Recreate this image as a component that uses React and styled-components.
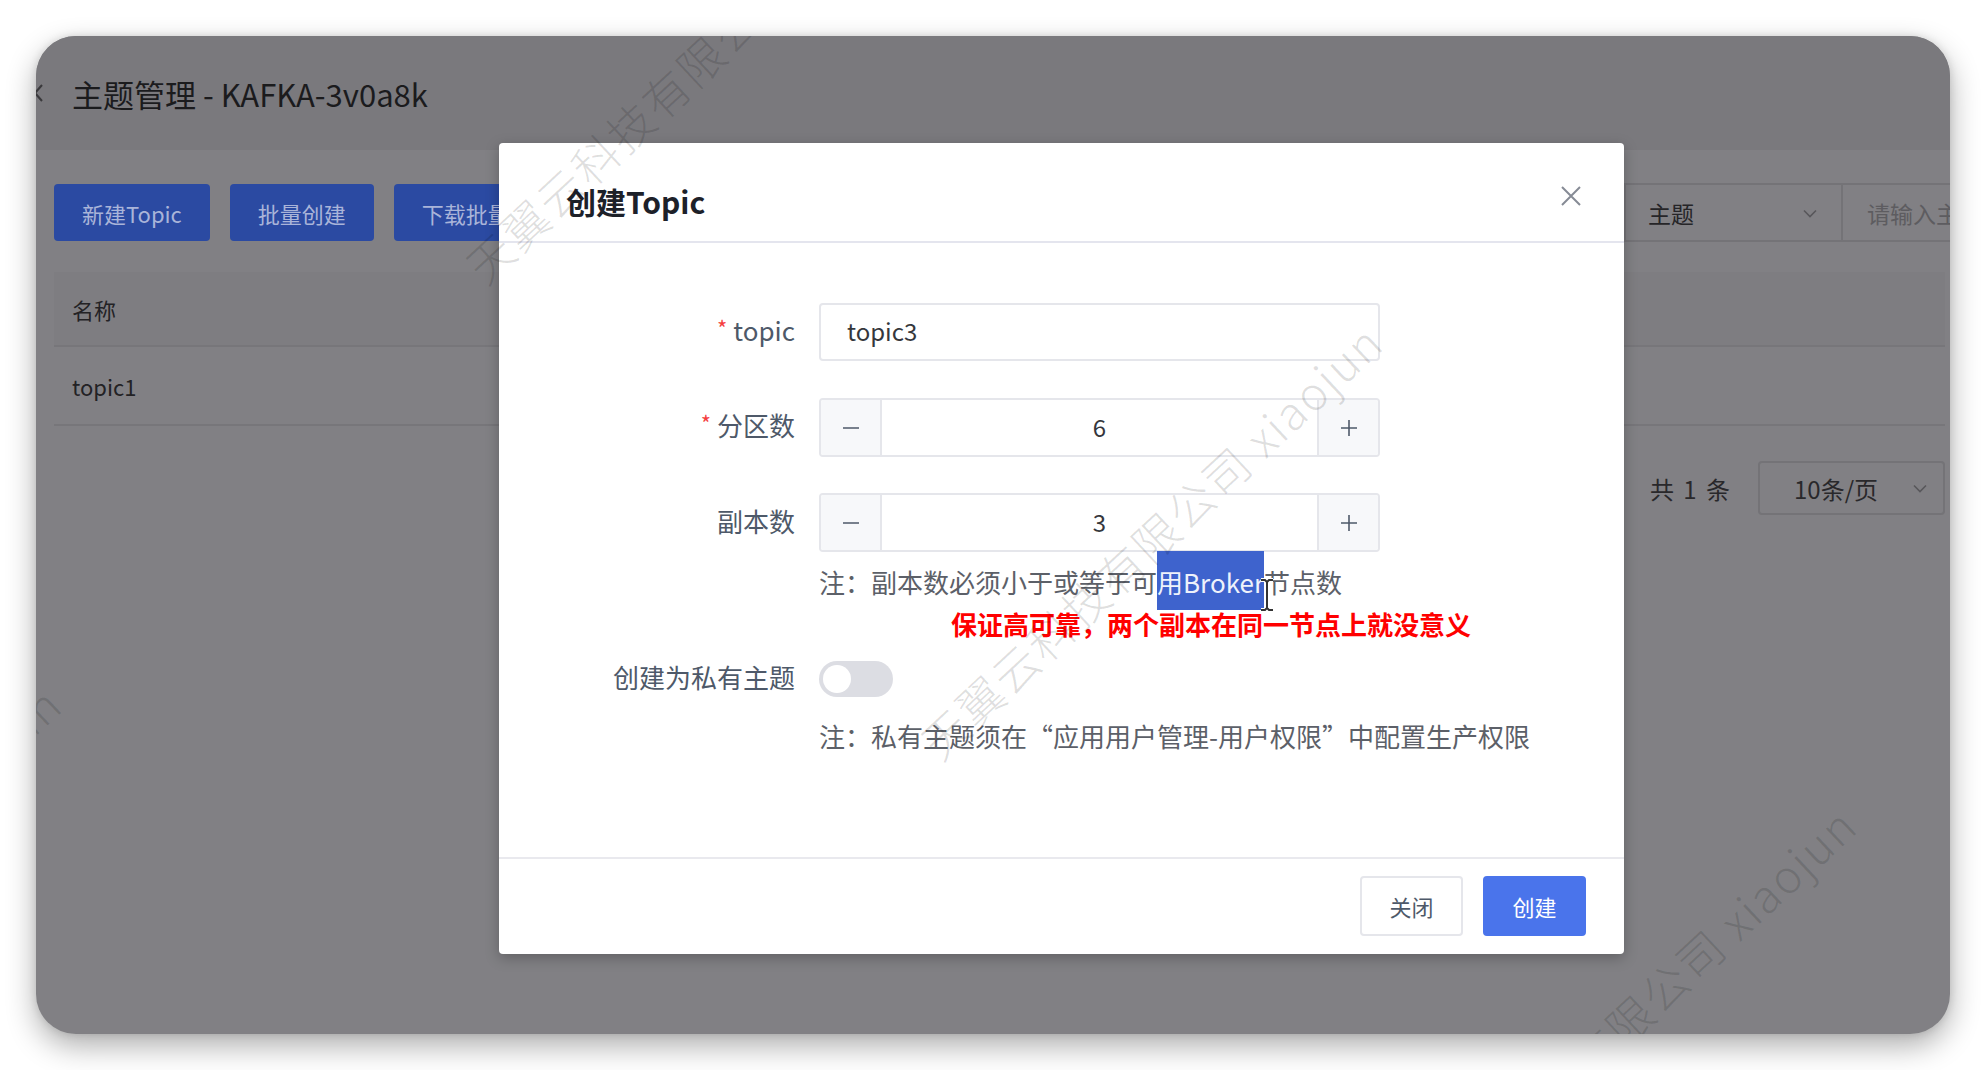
import styled, { createGlobalStyle } from "styled-components";

const GlobalStyle = createGlobalStyle`
  html, body {
    margin: 0;
    padding: 0;
    background: #ffffff;
  }
  body {
    font-family: "Noto Sans CJK SC", "Noto Sans", sans-serif;
  }
  * {
    box-sizing: border-box;
  }
`;

const Stage = styled.div`
  width: 1986px;
  height: 1070px;
  padding: 36px;
  background: #ffffff;
`;

const Window = styled.div`
  position: relative;
  width: 100%;
  height: 100%;
  border-radius: 40px;
  overflow: hidden;
  background: #818084;
  box-shadow: 0 12px 30px rgba(0, 0, 0, 0.32), 0 0 8px rgba(0, 0, 0, 0.12);
`;

/* ---------- dimmed page behind the dialog ---------- */

const Page = styled.div`
  display: flex;
  flex-direction: column;
  height: 100%;
`;

const PageHeader = styled.header`
  height: 114px;
  flex-shrink: 0;
  display: flex;
  align-items: center;
  gap: 28px;
  background: #7a797d;
  color: #1b1b1d;
  font-size: 31px;
`;

const Back = styled.svg`
  margin-left: -4px;
  flex-shrink: 0;
`;

const Content = styled.div`
  flex: 1;
  padding: 33px 5px 0 18px;
`;

const Toolbar = styled.div`
  display: flex;
  align-items: center;
`;

const ButtonGroup = styled.div`
  flex: 1;
  display: flex;
  gap: 20px;
`;

const DimButton = styled.div`
  height: 57px;
  padding: 0 28px;
  display: flex;
  align-items: center;
  border-radius: 4px;
  background: #2b4aa2;
  color: #a9b4d9;
  font-size: 22px;
`;

const FieldSelect = styled.div`
  width: 218px;
  height: 59px;
  display: flex;
  align-items: center;
  justify-content: space-between;
  padding: 0 22px 0 22px;
  border: 2px solid #747377;
  border-right-width: 1px;
  color: #262528;
  font-size: 23px;
`;

const SearchBox = styled.div`
  width: 200px;
  height: 59px;
  margin-right: -97px;
  display: flex;
  align-items: center;
  padding-left: 24px;
  border: 2px solid #747377;
  border-left-width: 1px;
  color: #5d5c60;
  font-size: 23px;
  white-space: nowrap;
  overflow: hidden;
`;

const Table = styled.div`
  margin-top: 30px;
`;

const TableRow = styled.div`
  display: flex;
  align-items: center;
  height: ${(p) => p.$h}px;
  padding-left: 18px;
  background: ${(p) => (p.$head ? "#7e7d81" : "transparent")};
  border-bottom: 2px solid #77767a;
  color: #232225;
  font-size: 22px;
`;

const Pagination = styled.div`
  margin-top: 35px;
  display: flex;
  justify-content: flex-end;
  align-items: center;
  gap: 28px;
  color: #29282b;
  font-size: 24px;
`;

const Total = styled.span`
  word-spacing: 4px;
`;

const PageSize = styled.div`
  width: 187px;
  height: 54px;
  display: flex;
  align-items: center;
  justify-content: space-between;
  padding: 0 14px 0 34px;
  border: 2px solid #747377;
  border-radius: 4px;
`;

/* ---------- mask + dialog ---------- */

const Mask = styled.div`
  position: absolute;
  inset: 0;
  display: flex;
  align-items: flex-start;
  padding: 107px 0 0 463px;
`;

const Modal = styled.div`
  width: 1125px;
  height: 811px;
  display: flex;
  flex-direction: column;
  background: #ffffff;
  border-radius: 4px;
  box-shadow: 0 4px 14px rgba(0, 0, 0, 0.25);
`;

const ModalHeader = styled.div`
  height: 100px;
  flex-shrink: 0;
  display: flex;
  align-items: center;
  justify-content: space-between;
  padding: 8px 42px 0 67px;
  border-bottom: 2px solid #e4e5ee;
`;

const ModalTitle = styled.div`
  font-size: 30px;
  font-weight: 600;
  color: #1d2129;
  margin-top: 10px;
`;

const ModalBody = styled.div`
  flex: 1;
  padding-top: 60px;
`;

const FormRow = styled.div`
  display: grid;
  grid-template-columns: 296px 561px;
  column-gap: 24px;
  align-items: center;
  margin-top: ${(p) => p.$mt || 0}px;
`;

const Label = styled.div`
  text-align: right;
  font-size: 26px;
  line-height: 32px;
  color: #4e5969;
  margin-top: -4px;
`;

const Star = styled.span`
  color: #f53f3f;
  font-size: 22px;
  margin-right: 6px;
  position: relative;
  top: -4px;
`;

const TextInput = styled.div`
  height: 58px;
  display: flex;
  align-items: center;
  padding: 0 26px 3px;
  border: 2px solid #e5e6eb;
  border-radius: 4px;
  font-size: 24px;
  color: #35373c;
`;

const NumberInput = styled.div`
  height: 59px;
  display: grid;
  grid-template-columns: 61px 1fr 61px;
  border: 2px solid #e5e6eb;
  border-radius: 4px;
  overflow: hidden;
`;

const Step = styled.div`
  display: flex;
  align-items: center;
  justify-content: center;
  background: #f7f8fa;
  border-left: ${(p) => (p.$side === "right" ? "2px solid #e5e6eb" : "none")};
  border-right: ${(p) => (p.$side === "left" ? "2px solid #e5e6eb" : "none")};
`;

const NumberValue = styled.div`
  display: flex;
  align-items: center;
  justify-content: center;
  padding-bottom: 2px;
  font-size: 24px;
  color: #35373c;
`;

const Hint = styled.div`
  position: relative;
  margin: ${(p) => p.$mt}px 0 0 320px;
  line-height: 36px;
  font-size: 26px;
  color: #5c6068;
  white-space: nowrap;
`;

const Selected = styled.span`
  background: #3e63cd;
  color: #eef2fb;
  padding: 12px 0 10px;
`;

const Cursor = styled.svg`
  position: absolute;
  left: 440px;
  top: 14px;
`;

const Annotation = styled.div`
  margin: 6px 0 0 452px;
  line-height: 36px;
  font-size: 26px;
  font-weight: 700;
  color: #ff0000;
  white-space: nowrap;
`;

const Toggle = styled.div`
  width: 74px;
  height: 36px;
  display: flex;
  align-items: center;
  padding: 0 4px;
  border-radius: 18px;
  background: #dcdde3;
`;

const Knob = styled.div`
  width: 28px;
  height: 28px;
  border-radius: 50%;
  background: #ffffff;
`;

const ModalFooter = styled.div`
  height: 97px;
  flex-shrink: 0;
  display: flex;
  justify-content: flex-end;
  align-items: center;
  gap: 20px;
  padding: 0 38px 2px 0;
  border-top: 2px solid #e9e9ee;
`;

const FooterButton = styled.div`
  width: 103px;
  height: 60px;
  display: flex;
  align-items: center;
  justify-content: center;
  border-radius: 4px;
  font-size: 22px;
  ${(p) =>
    p.$primary
      ? `
      background: #4a74eb;
      color: #ffffff;
      border: 2px solid #4a74eb;
    `
      : `
      background: #ffffff;
      color: #4e5969;
      border: 2px solid #e5e6eb;
    `}
`;

/* ---------- watermark layer ---------- */

const WatermarkLayer = styled.div`
  position: absolute;
  inset: 0;
  pointer-events: none;
  overflow: hidden;
`;

const Watermark = styled.span`
  position: absolute;
  left: ${(p) => p.$x}px;
  top: ${(p) => p.$y - 24}px;
  height: 48px;
  line-height: 48px;
  font-size: 46px;
  font-weight: 300;
  letter-spacing: 2px;
  white-space: nowrap;
  color: rgba(0, 0, 0, 0.13);
  transform-origin: 0 50%;
  transform: rotate(-43deg);
`;

const Chevron = () => (
  <svg width="18" height="18" viewBox="0 0 18 18">
    <path d="M3 6.5 L9 12.5 L15 6.5" fill="none" stroke="#58575b" strokeWidth="1.6" />
  </svg>
);

const Minus = () => (
  <svg width="20" height="20" viewBox="0 0 20 20">
    <path d="M2 10 H18" stroke="#4e5969" strokeWidth="1.6" />
  </svg>
);

const Plus = () => (
  <svg width="20" height="20" viewBox="0 0 20 20">
    <path d="M2 10 H18 M10 2 V18" stroke="#4e5969" strokeWidth="1.6" />
  </svg>
);

const marks = [
  { x: 436, y: 236 },
  { x: 891, y: 712 },
  { x: 1365, y: 1195 },
  { x: -430, y: 1074 },
];

export default function App() {
  return (
    <>
      <GlobalStyle />
      <Stage>
        <Window>
          <Page>
            <PageHeader>
              <Back width="12" height="22" viewBox="0 0 12 22">
                <path d="M10 3 L3 11 L10 19" fill="none" stroke="#3a393c" strokeWidth="2" />
              </Back>
              主题管理 - KAFKA-3v0a8k
            </PageHeader>
            <Content>
              <Toolbar>
                <ButtonGroup>
                  <DimButton>新建Topic</DimButton>
                  <DimButton>批量创建</DimButton>
                  <DimButton>下载批量模板</DimButton>
                </ButtonGroup>
                <FieldSelect>
                  主题
                  <Chevron />
                </FieldSelect>
                <SearchBox>请输入主题名称</SearchBox>
              </Toolbar>
              <Table>
                <TableRow $head $h={75}>名称</TableRow>
                <TableRow $h={79}>topic1</TableRow>
              </Table>
              <Pagination>
                <Total>共 1 条</Total>
                <PageSize>
                  10条/页
                  <Chevron />
                </PageSize>
              </Pagination>
            </Content>
          </Page>

          <Mask>
            <Modal>
              <ModalHeader>
                <ModalTitle>创建Topic</ModalTitle>
                <svg width="22" height="22" viewBox="0 0 22 22">
                  <path d="M2 2 L20 20 M20 2 L2 20" stroke="#868b95" strokeWidth="2" />
                </svg>
              </ModalHeader>

              <ModalBody>
                <FormRow>
                  <Label>
                    <Star>*</Star>topic
                  </Label>
                  <TextInput>topic3</TextInput>
                </FormRow>

                <FormRow $mt={37}>
                  <Label>
                    <Star>*</Star>分区数
                  </Label>
                  <NumberInput>
                    <Step $side="left">
                      <Minus />
                    </Step>
                    <NumberValue>6</NumberValue>
                    <Step $side="right">
                      <Plus />
                    </Step>
                  </NumberInput>
                </FormRow>

                <FormRow $mt={36}>
                  <Label>副本数</Label>
                  <NumberInput>
                    <Step $side="left">
                      <Minus />
                    </Step>
                    <NumberValue>3</NumberValue>
                    <Step $side="right">
                      <Plus />
                    </Step>
                  </NumberInput>
                </FormRow>

                <Hint $mt={12}>
                  注：副本数必须小于或等于可<Selected>用Broker</Selected>节点数
                  <Cursor width="16" height="34" viewBox="0 0 16 34">
                    <path
                      d="M2 2 H6 L8 4 L10 2 H14 M8 4 V30 M2 32 H6 L8 30 L10 32 H14"
                      fill="none"
                      stroke="#ffffff"
                      strokeWidth="4"
                    />
                    <path
                      d="M2 2 H6 L8 4 L10 2 H14 M8 4 V30 M2 32 H6 L8 30 L10 32 H14"
                      fill="none"
                      stroke="#333333"
                      strokeWidth="2"
                    />
                  </Cursor>
                </Hint>
                <Annotation>保证高可靠，两个副本在同一节点上就没意义</Annotation>

                <FormRow $mt={19}>
                  <Label>创建为私有主题</Label>
                  <Toggle>
                    <Knob />
                  </Toggle>
                </FormRow>

                <Hint $mt={21}>注：私有主题须在“应用用户管理-用户权限”中配置生产权限</Hint>
              </ModalBody>

              <ModalFooter>
                <FooterButton>关闭</FooterButton>
                <FooterButton $primary>创建</FooterButton>
              </ModalFooter>
            </Modal>
          </Mask>

          <WatermarkLayer>
            {marks.map((m, i) => (
              <Watermark key={i} $x={m.x} $y={m.y}>
                天翼云科技有限公司 xiaojun
              </Watermark>
            ))}
          </WatermarkLayer>
        </Window>
      </Stage>
    </>
  );
}
